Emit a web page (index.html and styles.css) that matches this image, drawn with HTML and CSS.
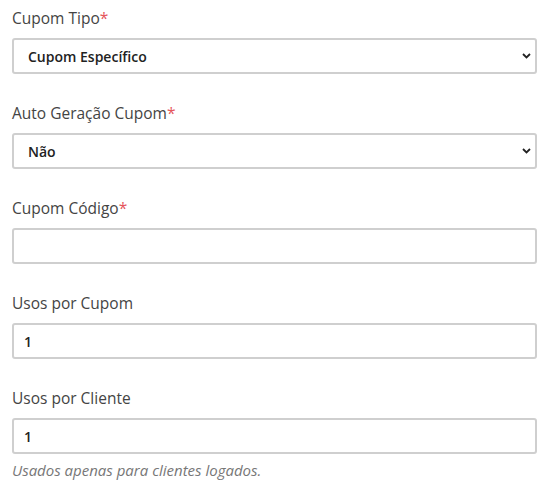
FILE: index.html
```html
<!DOCTYPE html>
<html lang="pt">
<head>
<meta charset="utf-8">
<link rel="stylesheet" href="styles.css">
</head>
<body>
<form class="form">
  <div class="field">
    <label class="label">Cupom Tipo<span class="req">*</span></label>
    <div class="select-wrap">
      <select class="control select">
        <option>Cupom Específico</option>
      </select>
      <svg class="chevron" width="9" height="6" viewBox="0 0 9 6"><path d="M1 1 L4.5 4.5 L8 1" fill="none" stroke="#222" stroke-width="1.8"/></svg>
    </div>
  </div>
  <div class="field">
    <label class="label">Auto Geração Cupom<span class="req">*</span></label>
    <div class="select-wrap">
      <select class="control select">
        <option>Não</option>
      </select>
      <svg class="chevron" width="9" height="6" viewBox="0 0 9 6"><path d="M1 1 L4.5 4.5 L8 1" fill="none" stroke="#222" stroke-width="1.8"/></svg>
    </div>
  </div>
  <div class="field">
    <label class="label">Cupom Código<span class="req">*</span></label>
    <input class="control" type="text" value="">
  </div>
  <div class="field">
    <label class="label">Usos por Cupom</label>
    <input class="control" type="text" value="1">
  </div>
  <div class="field">
    <label class="label">Usos por Cliente</label>
    <input class="control" type="text" value="1">
    <p class="help">Usados apenas para clientes logados.</p>
  </div>
</form>
</body>
</html>
```

FILE: styles.css
```css
html, body {
  margin: 0;
  padding: 0;
  background: #fff;
}
.form {
  padding: 8px 16px 0 12px;
  display: flex;
  flex-direction: column;
  gap: 29px;
}
.field {
  display: flex;
  flex-direction: column;
}
.label {
  font-family: "Open Sans", "Noto Sans", sans-serif;
  font-size: 15.5px;
  color: #444;
  line-height: 20px;
  margin-bottom: 10px;
}
.req {
  color: #e5555b;
}
.select-wrap {
  position: relative;
  width: 525px;
}
.control {
  box-sizing: border-box;
  width: 525px;
  height: 36px;
  border: 2px solid #cfcfcf;
  border-radius: 3px;
  background: #fff;
  padding: 0 10px;
  font-family: "Open Sans", "Noto Sans", sans-serif;
  font-weight: 600;
  font-size: 14px;
  color: #222;
  outline: none;
  margin: 0;
}
.select {
  -webkit-appearance: none;
  appearance: none;
  padding: 0 30px 0 14px;
}
.chevron {
  position: absolute;
  right: 6px;
  top: 15px;
  pointer-events: none;
}
.help {
  margin: 6px 0 0;
  font-family: "Open Sans", "Noto Sans", sans-serif;
  font-style: italic;
  font-size: 15px;
  color: #777;
}
```
